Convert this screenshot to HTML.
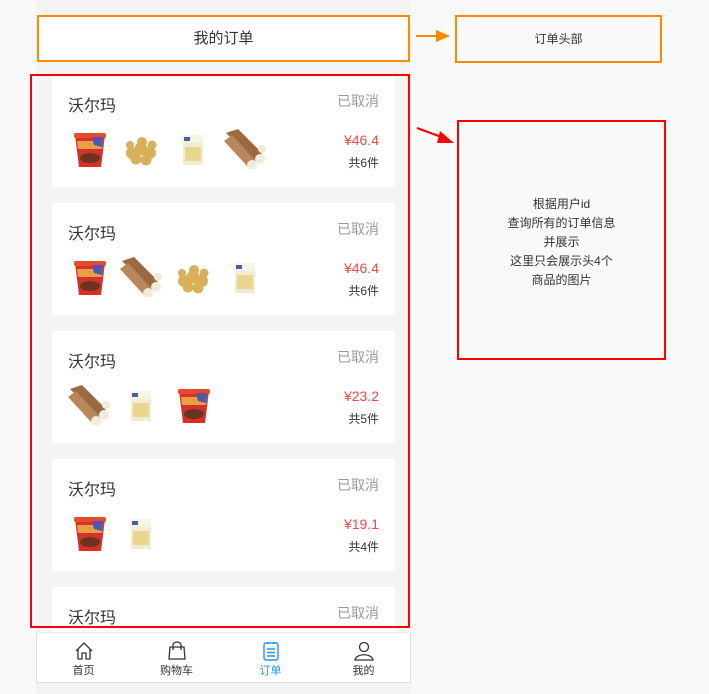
<!DOCTYPE html>
<html><head><meta charset="utf-8"><style>
*{margin:0;padding:0;box-sizing:border-box}
body{width:709px;height:694px;background:#f9f9f9;position:relative;overflow:hidden;font-family:"Liberation Sans","Noto Sans CJK SC",sans-serif}
.phone{position:absolute;left:36px;top:0;width:375px;height:694px;background:#f4f4f4}
.hdr{position:absolute;left:37px;top:15px;width:373px;height:47px;border:2px solid #ff8a00;background:#fff;text-align:center;line-height:43px;font-size:15px;color:#333}
.card{position:absolute;left:52px;width:343px;height:112px;background:#fff}
.name{position:absolute;left:16px;top:17px;font-size:16px;color:#333}
.st{position:absolute;right:16px;top:16px;font-size:14px;color:#999}
.pr{position:absolute;right:16px;top:57px;font-size:14px;color:#f04848}
.cnt{position:absolute;right:16px;top:79px;font-size:12px;color:#333}
.im{position:absolute;top:50px;width:52px;height:44px}
.nav{position:absolute;left:36px;top:632px;width:375px;height:51px;background:#fff;border:1px solid #ddd;border-top:1px solid #eee}
.ni{position:absolute;top:0;width:93px;text-align:center;font-size:11px;color:#333}
.ni svg{display:block;margin:8px auto 1px}
.box{position:absolute;font-size:12px;color:#333;text-align:center}
</style></head><body>
<svg width="0" height="0" style="position:absolute">
<defs>
<g id="cup"><path d="M5 8 L35 8 L31 40 L9 40 Z" fill="#d8302a"/><rect x="4" y="6" width="32" height="5" rx="2" fill="#e84a2a"/><path d="M7 14 L33 14 L32 22 L8 22Z" fill="#e8a040"/><path d="M22 10 L33 10 L32 20 L24 18Z" fill="#4a5ab0"/><ellipse cx="20" cy="31" rx="10" ry="5" fill="#6a3420"/></g>
<g id="pot" fill="#d9b05a"><circle cx="10" cy="24" r="6"/><circle cx="19" cy="20" r="6.5"/><circle cx="28" cy="24" r="6"/><circle cx="14" cy="30" r="5.5"/><circle cx="24" cy="31" r="5.5"/><circle cx="20" cy="13" r="5"/><circle cx="30" cy="16" r="4.5"/><circle cx="8" cy="16" r="4"/></g>
<g id="pak"><rect x="10" y="8" width="20" height="30" fill="#f2ecd2"/><rect x="10" y="8" width="20" height="8" fill="#f7f4e6"/><rect x="12" y="20" width="16" height="14" fill="#e8d690"/><rect x="11" y="10" width="6" height="4" fill="#4060b0"/></g>
<g id="yam"><path d="M2 6 L14 2 L38 26 L30 34Z" fill="#9a6a40"/><path d="M0 14 L8 8 L32 34 L24 40Z" fill="#b8875a"/><circle cx="36" cy="32" r="5" fill="#f2ebdc"/><circle cx="28" cy="38" r="5" fill="#f2ebdc"/><circle cx="38" cy="22" r="4" fill="#f2ebdc"/></g>
</defs></svg>
<div class="phone"></div>
<div class="hdr">我的订单</div>

<div class="card" style="top:75px"><div class="name">沃尔玛</div><div class="st">已取消</div>
<svg class="im" style="left:16px" viewBox="0 0 52 44"><use href="#cup" transform="translate(2,2)"/></svg>
<svg class="im" style="left:68px" viewBox="0 0 52 44"><use href="#pot" transform="translate(2,4)"/></svg>
<svg class="im" style="left:120px" viewBox="0 0 52 44"><use href="#pak" transform="translate(1,2)"/></svg>
<svg class="im" style="left:170px" viewBox="0 0 52 44"><use href="#yam" transform="translate(2,2)"/></svg>
<div class="pr">¥46.4</div><div class="cnt">共6件</div></div>

<div class="card" style="top:203px"><div class="name">沃尔玛</div><div class="st">已取消</div>
<svg class="im" style="left:16px" viewBox="0 0 52 44"><use href="#cup" transform="translate(2,2)"/></svg>
<svg class="im" style="left:66px" viewBox="0 0 52 44"><use href="#yam" transform="translate(2,2)"/></svg>
<svg class="im" style="left:120px" viewBox="0 0 52 44"><use href="#pot" transform="translate(2,4)"/></svg>
<svg class="im" style="left:172px" viewBox="0 0 52 44"><use href="#pak" transform="translate(1,2)"/></svg>
<div class="pr">¥46.4</div><div class="cnt">共6件</div></div>

<div class="card" style="top:331px"><div class="name">沃尔玛</div><div class="st">已取消</div>
<svg class="im" style="left:14px" viewBox="0 0 52 44"><use href="#yam" transform="translate(2,2)"/></svg>
<svg class="im" style="left:68px" viewBox="0 0 52 44"><use href="#pak" transform="translate(1,2)"/></svg>
<svg class="im" style="left:120px" viewBox="0 0 52 44"><use href="#cup" transform="translate(2,2)"/></svg>
<div class="pr">¥23.2</div><div class="cnt">共5件</div></div>

<div class="card" style="top:459px"><div class="name">沃尔玛</div><div class="st">已取消</div>
<svg class="im" style="left:16px" viewBox="0 0 52 44"><use href="#cup" transform="translate(2,2)"/></svg>
<svg class="im" style="left:68px" viewBox="0 0 52 44"><use href="#pak" transform="translate(1,2)"/></svg>
<div class="pr">¥19.1</div><div class="cnt">共4件</div></div>

<div class="card" style="top:587px;height:45px"><div class="name">沃尔玛</div><div class="st">已取消</div></div>

<div class="nav">
<div class="ni" style="left:0"><svg width="20" height="20" viewBox="0 0 20 20" fill="none" stroke="#333" stroke-width="1.3"><path d="M2 10 L10 2 L18 10 M4 8 V18 H8 V12 H12 V18 H16 V8"/></svg>首页</div>
<div class="ni" style="left:93px"><svg width="20" height="20" viewBox="0 0 20 20" fill="none" stroke="#333" stroke-width="1.3"><path d="M3 6 H17 L18 18 H2 Z M6 9 V4 A4 3 0 0 1 14 4 V9"/></svg>购物车</div>
<div class="ni" style="left:187px;color:#2196f3"><svg width="20" height="20" viewBox="0 0 20 20" fill="none" stroke="#2196f3" stroke-width="1.4"><rect x="3" y="2" width="14" height="17" rx="2"/><path d="M7 1 V3 M13 1 V3 M6 8 H14 M6 11.5 H14 M6 15 H14"/></svg>订单</div>
<div class="ni" style="left:280px"><svg width="20" height="20" viewBox="0 0 20 20" fill="none" stroke="#333" stroke-width="1.3"><circle cx="10" cy="6" r="4.5"/><path d="M1 19 C2 12 18 12 19 19 Z"/></svg>我的</div>
</div>

<div style="position:absolute;left:30px;top:74px;width:380px;height:554px;border:2px solid #f00"></div>

<svg style="position:absolute;left:0;top:0" width="709" height="694">
<line x1="416" y1="36" x2="440" y2="36" stroke="#ff8a00" stroke-width="2"/><path d="M436 30 L450 36 L436 42Z" fill="#ff8a00"/>
<line x1="417" y1="128" x2="444" y2="138" stroke="#f00" stroke-width="2"/><path d="M440 131 L454 143 L437 143Z" fill="#f00"/>
</svg>
<div class="box" style="left:455px;top:15px;width:207px;height:48px;border:2px solid #ff8a00;line-height:44px">订单头部</div>
<div class="box" style="left:457px;top:120px;width:209px;height:240px;border:2px solid #f00;padding-top:73px;line-height:19px">根据用户id<br>查询所有的订单信息<br>并展示<br>这里只会展示头4个<br>商品的图片</div>
</body></html>
